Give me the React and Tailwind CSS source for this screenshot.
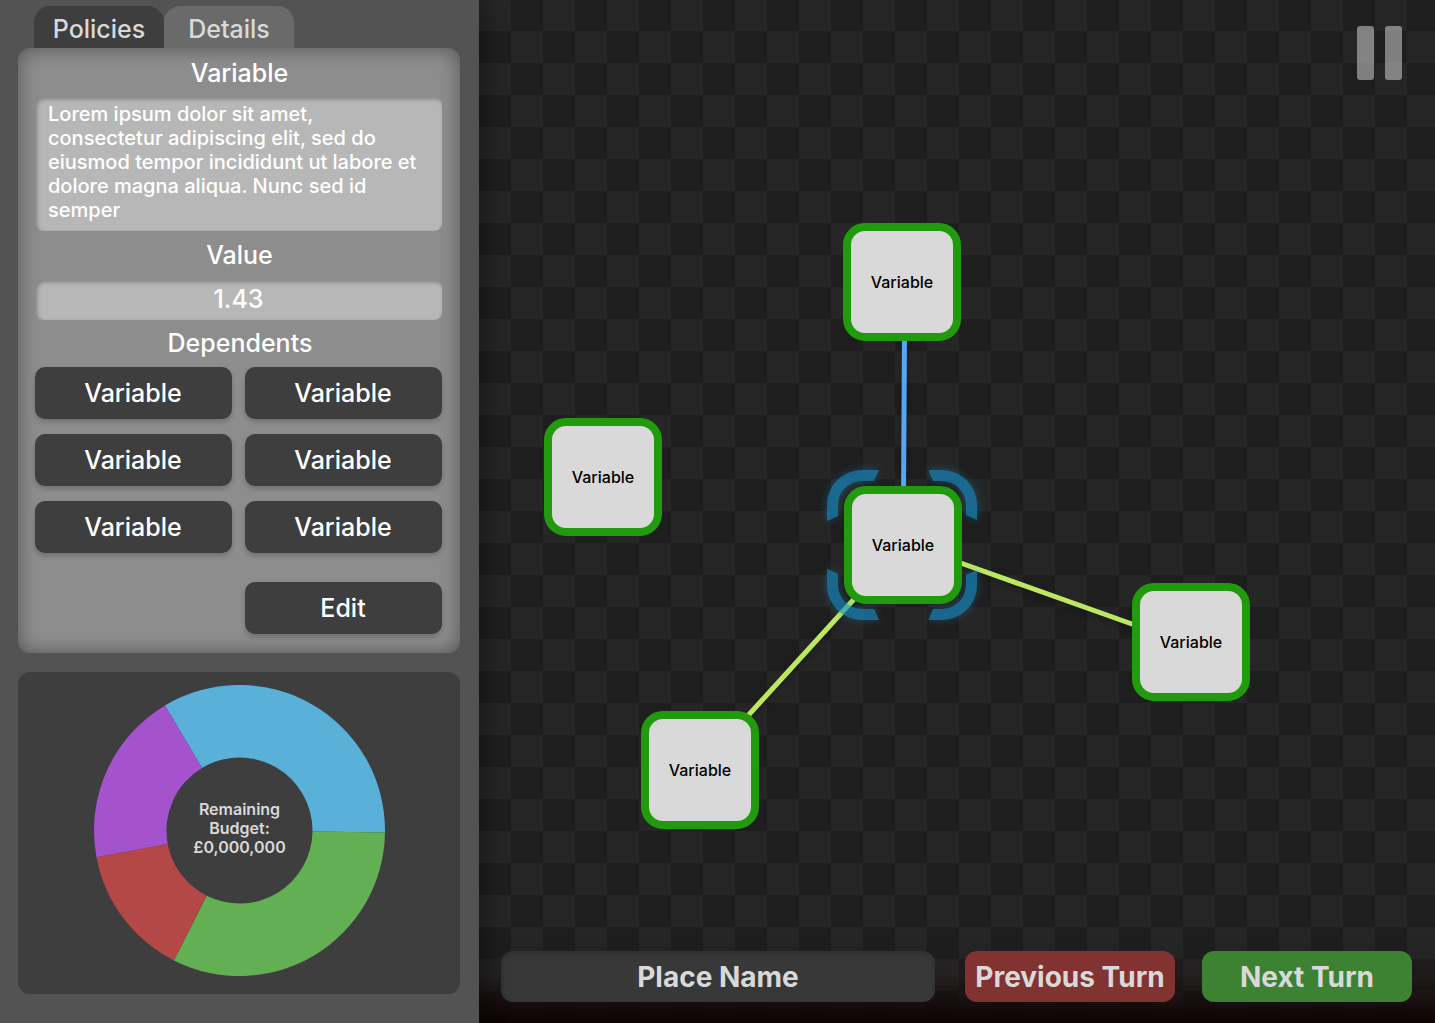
const nodes = [
  { x: 364, y: 223 },
  { x: 65, y: 418 },
  { x: 365, y: 486 },
  { x: 653, y: 583 },
  { x: 162, y: 711 },
];

const slices = [
  { color: '#59b1da', d: 'M-74.5 -125A145.5 145.5 0 0 1 145.5 1.9L73 1A73 73 0 0 0 -37.5 -62.6Z' },
  { color: '#62af54', d: 'M145.5 1.9A145.5 145.5 0 0 1 -65.6 129.9L-32.9 65.2A73 73 0 0 0 73 1Z' },
  { color: '#b44846', d: 'M-65.6 129.9A145.5 145.5 0 0 1 -143 26.7L-71.8 13.4A73 73 0 0 0 -32.9 65.2Z' },
  { color: '#a453cc', d: 'M-143 26.7A145.5 145.5 0 0 1 -74.5 -125L-37.5 -62.6A73 73 0 0 0 -71.8 13.4Z' },
];

function Button({ children, className = '' }) {
  return (
    <button
      className={`flex h-[52px] items-center justify-center rounded-[10px] bg-[#3e3e3e] pt-px pr-px text-[25px] font-medium text-white shadow-[0_3px_5px_rgba(0,0,0,0.2)] ${className}`}
    >
      {children}
    </button>
  );
}

function Tab({ children, className }) {
  return (
    <div className={`flex h-[42px] w-[130px] items-center justify-center rounded-t-[16px] pt-[5px] text-[25px] font-medium text-[#d9d9d9] ${className}`}>
      {children}
    </div>
  );
}

function BudgetChart() {
  return (
    <section className="mt-[19px] grid h-[322px] place-items-center rounded-[12px] bg-[#3e3e3e] pb-[5px] pl-px">
      <svg className="col-start-1 row-start-1" width="292" height="292" viewBox="-145.5 -145.5 292 292">
        {slices.map((s) => (
          <path key={s.color} d={s.d} fill={s.color} />
        ))}
      </svg>
      <p className="col-start-1 row-start-1 pb-[4px] text-center text-[16px] leading-[19px] font-semibold text-[#d9d9d9]">
        Remaining
        <br />
        Budget:
        <br />
        £0,000,000
      </p>
    </section>
  );
}

function Sidebar() {
  return (
    <aside className="z-10 h-full w-[479px] shrink-0 bg-[#535353] pt-[6px] pr-[19px] pl-[18px] shadow-[4px_0_24px_rgba(0,0,0,0.4)]">
      <div className="flex pl-[16px]">
        <Tab className="bg-[#3e3e3e]">Policies</Tab>
        <Tab className="bg-[#6a6a6a]">Details</Tab>
      </div>
      <section className="h-[605px] rounded-[12px] bg-[#8d8d8d] pr-[18px] pl-[17px] text-center text-[25px] font-medium text-white shadow-[inset_0_0_20px_rgba(0,0,0,0.42)]">
        <h2 className="h-[49px] pl-[2px] leading-[50px]">Variable</h2>
        <p className="h-[134px] rounded-[8px] bg-[#b7b7b7] pt-[5px] pl-[13px] text-left text-[20px] leading-[24px] shadow-[inset_2px_2px_4px_rgba(0,0,0,0.3)]">
          Lorem ipsum dolor sit amet,
          <br />
          consectetur adipiscing elit, sed do
          <br />
          eiusmod tempor incididunt ut labore et
          <br />
          dolore magna aliqua. Nunc sed id
          <br />
          semper
        </p>
        <h2 className="h-[49px] pl-[2px] leading-[48px]">Value</h2>
        <p className="h-[40px] rounded-[8px] bg-[#b7b7b7] leading-[38px] shadow-[inset_2px_2px_4px_rgba(0,0,0,0.3)]">1.43</p>
        <h2 className="h-[47px] pl-[3px] leading-[46px]">Dependents</h2>
        <div className="grid grid-cols-2 gap-x-[13px] gap-y-[15px]">
          <Button>Variable</Button>
          <Button>Variable</Button>
          <Button>Variable</Button>
          <Button>Variable</Button>
          <Button>Variable</Button>
          <Button>Variable</Button>
          <Button className="col-start-2 mt-[14px]">Edit</Button>
        </div>
      </section>
      <BudgetChart />
    </aside>
  );
}

function Node({ x, y }) {
  return (
    <div
      className="absolute flex size-[118px] items-center justify-center rounded-[22px] border-8 border-[#219b0d] bg-[#d9d9d9] text-[16px] font-medium text-black"
      style={{ left: x, top: y }}
    >
      Variable
    </div>
  );
}

function Selection() {
  const left = 'M0 51V35A35 35 0 0 1 35 0H52L47 11H35A24 24 0 0 0 11 35V46Z';
  const right = 'M0 50V35A35 35 0 0 1 35 0H48.5L44 11H35A24 24 0 0 0 11 35V45Z';
  return (
    <svg
      className="absolute top-[470px] left-[348px] overflow-visible opacity-65 drop-shadow-[0_0_4px_rgba(23,142,200,0.6)]"
      width="150"
      height="150"
      fill="#178ec8"
    >
      <path d={left} />
      <path d={right} transform="translate(150 0) scale(-1 1)" />
      <path d={left} transform="translate(0 150) scale(1 -1)" />
      <path d={right} transform="translate(150 150) scale(-1 -1)" />
    </svg>
  );
}

function Board() {
  return (
    <main className="relative flex h-full flex-1 flex-col justify-between overflow-hidden bg-[repeating-conic-gradient(#1e1e1e_0_25%,#262626_0_50%)] bg-[length:64px_64px] bg-[position:0_-1px]">
      <svg
        className="absolute inset-0 drop-shadow-[0_3px_3px_rgba(0,0,0,0.3)]"
        width="956"
        height="1023"
        fill="none"
        strokeWidth="5"
      >
        <path d="M425.5 330L424.5 500" stroke="#55a6f5" />
        <path d="M476 561L660 626.5M376.5 597.5L265.5 719.5" stroke="#bbe85f" />
      </svg>
      <Selection />
      {nodes.map((n) => (
        <Node key={n.y} x={n.x} y={n.y} />
      ))}
      <button className="relative mt-[26px] mr-[33px] flex gap-[11px] self-end" aria-label="Pause">
        <span className="h-[54px] w-[17px] rounded-[3px] bg-white/43" />
        <span className="h-[54px] w-[17px] rounded-[3px] bg-white/43" />
      </button>
      <footer className="relative flex h-[92px] items-start bg-linear-to-b from-transparent via-[#1c1212]/30 to-[#0d0203]/95 pt-[20px] pl-[22px] text-[28px] leading-[53px] font-bold text-[#d9d9d9]">
        <div className="h-[51px] w-[434px] rounded-[12px] bg-[#383838] text-center shadow-[inset_0_2px_5px_rgba(0,0,0,0.2)]">Place Name</div>
        <button className="ml-[30px] h-[51px] w-[210px] rounded-[12px] bg-[#833232] whitespace-nowrap">Previous Turn</button>
        <button className="ml-[27px] h-[51px] w-[210px] rounded-[12px] bg-[#3d8233]">Next Turn</button>
      </footer>
    </main>
  );
}

export default function App() {
  return (
    <div className="flex h-[1023px] w-[1435px] overflow-hidden font-['Inter',sans-serif]">
      <Sidebar />
      <Board />
    </div>
  );
}
